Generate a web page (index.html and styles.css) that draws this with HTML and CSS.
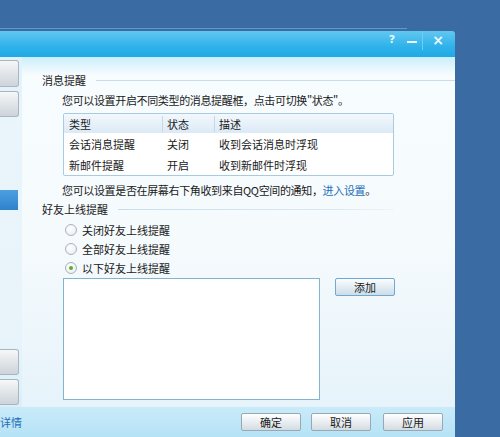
FILE: index.html
```html
<!DOCTYPE html>
<html lang="zh-CN">
<head>
  <meta charset="UTF-8">
  <title>系统设置 - 提醒</title>
  <link rel="stylesheet" href="styles.css">
</head>
<body>
  <div class="back-edge"></div>

  <div class="window">
    <div class="titlebar">
      <span class="tb-btn">?</span>
      <span class="tb-btn tb-min"></span>
      <span class="tb-sep"></span>
      <span class="tb-btn tb-close">×</span>
    </div>

    <div class="window-body">
      <div class="sidebar">
        <div class="side-btn first"></div>
        <div class="side-btn"></div>
        <div class="side-active"></div>
        <div class="side-spacer"></div>
        <div class="side-btn"></div>
        <div class="side-btn"></div>
      </div>

      <div class="main">
        <div class="section-title">
          <span>消息提醒</span>
          <span class="rule"></span>
        </div>
        <p class="desc first-desc">您可以设置开启不同类型的消息提醒框，点击可切换"状态"。</p>

        <div class="table">
          <div class="row head">
            <span class="c1">类型</span>
            <span class="c2">状态</span>
            <span class="c3">描述</span>
          </div>
          <div class="row">
            <span class="c1">会话消息提醒</span>
            <span class="c2">关闭</span>
            <span class="c3">收到会话消息时浮现</span>
          </div>
          <div class="row">
            <span class="c1">新邮件提醒</span>
            <span class="c2">开启</span>
            <span class="c3">收到新邮件时浮现</span>
          </div>
        </div>

        <p class="desc second-desc">您可以设置是否在屏幕右下角收到来自QQ空间的通知，<a class="link">进入设置</a>。</p>

        <div class="section-title friends">
          <span>好友上线提醒</span>
          <span class="rule short"></span>
        </div>

        <div class="radios">
          <label class="radio"><span class="dot"></span>关闭好友上线提醒</label>
          <label class="radio"><span class="dot"></span>全部好友上线提醒</label>
          <label class="radio"><span class="dot checked"></span>以下好友上线提醒</label>
        </div>

        <div class="friend-box">
          <div class="list"></div>
          <button class="btn add">添加</button>
        </div>
      </div>
    </div>

    <div class="footer">
      <a class="link details">详情</a>
      <div class="footer-btns">
        <button class="btn">确定</button>
        <button class="btn">取消</button>
        <button class="btn last">应用</button>
      </div>
    </div>
  </div>
</body>
</html>
```

FILE: styles.css
```css
body {
  margin: 0;
  height: 437px;
  overflow: hidden;
  background-color: #3a6ba3;
  font-family: "Noto Sans CJK SC", "Noto Sans", sans-serif;
  font-size: 11px;
  color: #1a1a1a;
}
.back-edge {
  width: 407px;
  height: 1px;
  margin-top: 28px;
  background-color: #6b95c2;
}
.window {
  width: 455px;
  height: 406px;
  margin-top: 2px;
  display: flex;
  flex-direction: column;
  border-top-right-radius: 3px;
  overflow: hidden;
}
.titlebar {
  height: 26px;
  display: flex;
  justify-content: flex-end;
  align-items: flex-start;
  padding-right: 2px;
  background: linear-gradient(#62c7f0, #2fb2ea 60%, #1fa9e6);
}
.tb-btn {
  width: 20px;
  height: 19px;
  line-height: 18px;
  text-align: center;
  color: #e8f6fd;
  font-family: "DejaVu Sans", sans-serif;
  font-size: 11px;
  font-weight: bold;
}
.tb-min {
  position: relative;
}
.tb-min::after {
  content: "";
  position: absolute;
  left: 5px;
  top: 10px;
  width: 10px;
  height: 2px;
  background-color: #e8f6fd;
}
.tb-sep {
  width: 1px;
  height: 19px;
  background-color: #6fcdf3;
}
.tb-close {
  width: 30px;
  font-size: 14px;
}
.window-body {
  height: 350px;
  display: flex;
}
.sidebar {
  width: 22px;
  display: flex;
  flex-direction: column;
  background: linear-gradient(#dff2fb, #eaf5fb 20%, #e8f4fa 80%, #dbeff9);
}
.side-btn {
  width: 18px;
  height: 24px;
  margin-top: 3px;
  border: 1px solid #a9b5bf;
  border-left: none;
  border-radius: 0 3px 3px 0;
  background: linear-gradient(#f6f7f8, #e1e5e8 50%, #cdd4da);
}
.side-btn.first {
  margin-top: 3px;
  height: 25px;
}
.side-btn + .side-btn {
  margin-top: 4px;
}
.side-active {
  width: 18px;
  height: 20px;
  margin-top: 73px;
  background: linear-gradient(#4b9fe0, #2f83cc);
}
.side-spacer {
  flex: 1;
}
.sidebar .side-btn:last-child {
  margin-bottom: 2px;
}
.main {
  flex: 1;
  padding: 15px 0 0 20px;
  background: linear-gradient(#cbeefb 0, #f7fcfe 18px, #f5fafd 55%, #e6f3fa 100%);
}
.section-title {
  height: 16px;
  display: flex;
  align-items: center;
  gap: 10px;
}
.rule {
  flex: 1;
  height: 1px;
  background-color: #c8dde9;
}
.rule.short {
  flex: none;
  width: 276px;
  background: linear-gradient(to right, #c8dde9, #dbe9f1 80%, #eef5f9);
}
.desc {
  margin: 0 0 0 20px;
  line-height: 16px;
  letter-spacing: -0.35px;
}
.first-desc {
  margin-top: 4px;
}
.second-desc {
  margin-top: 6px;
}
.link {
  color: #1f6fb8;
}
.table {
  width: 329px;
  margin: 5px 0 0 21px;
  border: 1px solid #a8cbe2;
  border-radius: 2px;
  background-color: #fff;
}
.row {
  height: 21px;
  display: flex;
  align-items: center;
}
.row.head {
  height: 19px;
  background: linear-gradient(#f3f8fc, #dbeaf6);
}
.c1, .c2, .c3 {
  padding-left: 5px;
  box-sizing: border-box;
}
.c1 {
  width: 98px;
}
.c2 {
  width: 52px;
}
.c3 {
  flex: 1;
}
.head .c2, .head .c3 {
  border-left: 1px solid #c4d8e6;
  padding-left: 4px;
}
.friends {
  margin-top: 3px;
}
.radios {
  margin: 3px 0 0 23px;
  display: flex;
  flex-direction: column;
}
.radio {
  height: 19px;
  display: flex;
  align-items: center;
  gap: 5px;
}
.dot {
  width: 10px;
  height: 10px;
  border: 1px solid #a8b3bd;
  border-radius: 50%;
  background: radial-gradient(circle at 40% 35%, #ffffff, #e6eaee);
  display: flex;
  align-items: center;
  justify-content: center;
}
.dot.checked::after {
  content: "";
  width: 4px;
  height: 4px;
  border-radius: 50%;
  background-color: #5cae2e;
}
.friend-box {
  display: flex;
  align-items: flex-start;
  gap: 15px;
  margin: 1px 0 0 21px;
}
.list {
  width: 255px;
  height: 120px;
  border: 1px solid #84b3cf;
  background-color: #fff;
}
.btn {
  width: 60px;
  height: 18px;
  padding: 0;
  border: 1px solid #98a9b6;
  border-radius: 2px;
  background: linear-gradient(#ffffff, #e9eef1 50%, #d3dce2);
  font-family: "Noto Sans CJK SC", sans-serif;
  font-size: 11px;
  color: #1a1a1a;
  line-height: 16px;
}
.btn.add {
  border-color: #6fa9d3;
  background: linear-gradient(#fbfdfe, #e2edf4 50%, #cfdde7);
}
.footer {
  height: 30px;
  display: flex;
  align-items: center;
  justify-content: space-between;
  background: linear-gradient(#c9ebf9, #b6e2f6);
}
.details {
  margin-left: 0;
  line-height: 16px;
}
.footer-btns {
  display: flex;
  gap: 10px;
  padding-right: 12px;
}
.footer-btns .last {
  margin-left: 2px;
}
```
